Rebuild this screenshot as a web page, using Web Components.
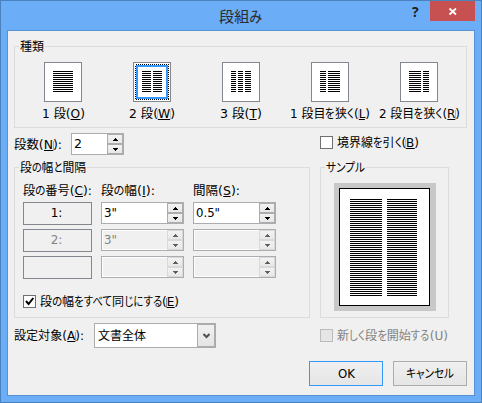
<!DOCTYPE html>
<html lang="ja">
<head>
<meta charset="utf-8">
<title>段組み</title>
<style>
    body {
        margin: 0;
        font: 12px/16px "DejaVu Sans", "Noto Sans CJK JP", sans-serif;
        color: #000;
        overflow: hidden;
    }
</style>
</head>
<body>
<columns-dialog></columns-dialog>
<script>
// Text with narrow kana; "_X" underlines X, "w" is the run width in px
class UiLabel extends HTMLElement {
    constructor() {
        super();
        this.attachShadow({ mode: 'open' });
    }

    connectedCallback() {
        const text = this.getAttribute('text');
        const html = text
            .replace(/[\u3041-\u30ff]+/g, '<span class="kana"><span>$&</span></span>')
            .replace(/_(.)/g, '<u>$1</u>');
        this.shadowRoot.innerHTML = `
            <style>
                :host { display: inline-block; height: 16px; white-space: nowrap; text-align: left; flex: none; }
                .run, .kana, .kana span { display: inline-block; transform-origin: 0 50%; }
                .run { line-height: 16px; }
                .kana { line-height: 1; }
                .kana span { transform: scaleX(.86); font-feature-settings: "palt"; }
                u { text-decoration: none; box-shadow: 0 1px 0 currentColor; display: inline-block; line-height: 10px; }
            </style>
            <span class="run">${html}</span>
        `;
        this.shadowRoot.querySelectorAll('.kana').forEach(kana => {
            kana.style.width = kana.firstChild.getBoundingClientRect().width + 'px';
        });
        const run = this.shadowRoot.querySelector('.run');
        const width = Number(this.getAttribute('w'));
        if (width) {
            run.style.transform = `scaleX(${width / run.getBoundingClientRect().width})`;
            this.style.width = width + 'px';
        }
    }
}

class GroupBox extends HTMLElement {
    constructor() {
        super();
        this.attachShadow({ mode: 'open' });
        this.shadowRoot.innerHTML = `
            <style>
                :host { display: block; box-sizing: border-box; position: relative; border: 1px solid #dcdcdc; }
                .legend { position: absolute; left: 4px; top: -8px; height: 16px; padding: 0 1px; background: #f0f0f0; }
            </style>
            <div class="legend"><slot name="legend"></slot></div>
            <slot></slot>
        `;
    }
}

class PresetTile extends HTMLElement {
    constructor() {
        super();
        this.attachShadow({ mode: 'open' });
    }

    connectedCallback() {
        let lines = '';
        this.getAttribute('cols').split(' ').forEach(col => {
            const [x, w] = col.split(',');
            for (let i = 0; i < 11; i++) {
                lines += `<rect x="${x}" y="${9 + i * 2}" width="${w}" height="1"/>`;
            }
        });
        const focus = this.hasAttribute('selected') ? `
            <rect x="2.5" y="2.5" width="33" height="35" fill="none" stroke="#000" stroke-dasharray="1 1"/>
            <rect x="4" y="4" width="30" height="32" fill="none" stroke="#3399ff" stroke-width="2"/>` : '';
        this.shadowRoot.innerHTML = `
            <style>
                :host { display: flex; flex-direction: column; align-items: center; }
                svg { display: block; margin-bottom: 4px; }
            </style>
            <svg width="38" height="40" shape-rendering="crispEdges">
                <rect x=".5" y=".5" width="37" height="39" fill="#fff" stroke="#828790"/>
                ${focus}${lines}
            </svg>
            <slot></slot>
        `;
    }
}

class SpinBox extends HTMLElement {
    constructor() {
        super();
        this.attachShadow({ mode: 'open' });
        this.shadowRoot.innerHTML = `
            <style>
                :host {
                    display: flex; box-sizing: border-box; width: 83px; height: 22px;
                    border: 1px solid #abadb3; background: #fff; --edge: #acacac; --arrow: #000;
                }
                :host([disabled]) { color: #838383; --edge: #d9d9d9; --arrow: #606060; }
                .value { flex: 1; margin: 1px 0 1px 1px; padding-left: 1px; height: 18px; line-height: 18px; }
                :host([disabled]) .value { background: #f0f0f0; }
                .buttons { width: 16px; display: grid; grid-template-rows: 10px 10px; }
                .buttons div {
                    box-sizing: border-box; border: 1px solid var(--edge); background: linear-gradient(#f2f2f2, #e8e8e8);
                    display: flex; align-items: center; justify-content: center;
                }
                svg { display: block; fill: var(--arrow); }
            </style>
            <div class="value"><slot></slot></div>
            <div class="buttons">
                <div><svg width="5" height="3" shape-rendering="crispEdges"><path d="M2 0h1v1h1v1h1v1H0V2h1V1h1z"/></svg></div>
                <div><svg width="5" height="3" shape-rendering="crispEdges"><path d="M0 0h5v1H4v1H3v1H2V2H1V1H0z"/></svg></div>
            </div>
        `;
    }
}

class CheckBox extends HTMLElement {
    constructor() {
        super();
        this.attachShadow({ mode: 'open' });
        this.shadowRoot.innerHTML = `
            <style>
                :host { display: flex; height: 16px; gap: 4px; }
                .box { box-sizing: border-box; width: 13px; height: 13px; margin-top: 1px; border: 1px solid #707070; background: #fff; }
                :host([disabled]) { color: #838383; }
                :host([disabled]) .box { border-color: #bcbcbc; background: #e6e6e6; }
                svg { display: none; }
                :host([checked]) svg { display: block; }
            </style>
            <div class="box"><svg width="11" height="11"><path d="M2 5l2.6 3L9.3 2" fill="none" stroke="#000" stroke-width="2"/></svg></div>
            <slot></slot>
        `;
    }
}

class PushButton extends HTMLElement {
    constructor() {
        super();
        this.attachShadow({ mode: 'open' });
        this.shadowRoot.innerHTML = `
            <style>
                :host {
                    display: flex; align-items: center; justify-content: center; box-sizing: border-box;
                    width: 74px; height: 25px; border: 1px solid #acacac; background: linear-gradient(#f0f0f0, #e5e5e5);
                }
                :host([default]) { border-color: #3399ff; }
            </style>
            <slot></slot>
        `;
    }
}

class SamplePage extends HTMLElement {
    constructor() {
        super();
        this.attachShadow({ mode: 'open' });
        let lines = '';
        for (let y = 16; y <= 112; y += 2) {
            lines += `<path d="M16 ${y}h32v1H16zM53 ${y}h30v1H53z"/>`;
        }
        this.shadowRoot.innerHTML = `
            <style>
                :host { display: block; }
                svg { display: block; }
            </style>
            <svg width="102" height="128" shape-rendering="crispEdges">
                <rect width="102" height="128" fill="#c8c8c8"/>
                <rect x="5.5" y="5.5" width="90" height="117" fill="#fff" stroke="#000"/>
                ${lines}
            </svg>
        `;
    }
}

class ColumnsDialog extends HTMLElement {
    constructor() {
        super();
        this.attachShadow({ mode: 'open' });
        this.shadowRoot.innerHTML = `
            <style>
                :host {
                    display: flex; flex-direction: column; box-sizing: border-box; width: 482px; height: 403px;
                    border: 1px solid #4a82bd; background: #6badf6;
                }
                header { height: 29px; display: grid; grid-template-columns: 1fr auto 1fr; }
                .title { font-size: 15px; color: #2b2b2b; padding: 8px 2px 0 0; }
                .controls { display: flex; justify-content: flex-end; padding-right: 6px; }
                .help { font: bold 14px/21px "Open Sans", sans-serif; color: #1e1e1e; width: 18px; }
                .close { width: 45px; height: 20px; background: #c75050; }
                .close svg { display: block; }
                main {
                    box-sizing: border-box; width: 468px; height: 366px; margin-left: 6px; flex: none;
                    border: 1px solid #5591d3; background: #f0f0f0; padding: 15px 7px 0 6px;
                }
                .presets { height: 82px; }
                .tiles { display: grid; grid-template-columns: repeat(5, 88px); gap: 1px; padding: 15px 0 0 4px; }
                .body { display: grid; grid-template-columns: 296px 129px; grid-template-rows: 34px 151px 43px; column-gap: 10px; padding-top: 5px; }
                .row { display: flex; align-items: flex-start; }
                .count > ui-label { margin: 4px 9px 0 0; }
                .count spin-box { width: 53px; }
                .fields { display: grid; grid-template-columns: 69px 83px 83px; column-gap: 9px; grid-template-rows: 19px 27px 27px 27px; padding: 15px 0 0 8px; }
                .cell { box-sizing: border-box; height: 23px; border: 1px solid #828790; line-height: 21px; text-align: center; padding-right: 2px; }
                .off { color: #838383; }
                .same { margin: 11px 0 0 8px; }
                .sample sample-page { margin: 15px 0 0 13px; }
                .line { margin-top: 2px; }
                .start { margin-top: 10px; }
                .apply { padding-top: 5px; }
                .apply > ui-label { margin-top: 5px; }
                .combo { box-sizing: border-box; width: 122px; height: 25px; border: 1px solid #acacac; border-right-width: 2px; background: #fff; display: flex; margin-left: 10px; }
                .combo ui-label { margin: 4px 0 0 3px; }
                .drop { width: 17px; margin-left: auto; box-sizing: border-box; border: solid #acacac; border-width: 1px 0 1px 1px; background: linear-gradient(#f0f0f0, #e5e5e5); display: flex; align-items: center; justify-content: center; }
                footer { display: flex; justify-content: flex-end; gap: 10px; }
            </style>
            <header>
                <div></div>
                <div class="title"><ui-label text="段組み" w="43"></ui-label></div>
                <div class="controls">
                    <div class="help">?</div>
                    <div class="close">
                        <svg width="45" height="20"><path d="M19.5 7.5l6.5 6M26 7.5l-6.5 6" stroke="#fff" stroke-width="1.8"/></svg>
                    </div>
                </div>
            </header>
            <main>
                <group-box class="presets">
                    <ui-label slot="legend" text="種類" w="24"></ui-label>
                    <div class="tiles">
                        <preset-tile cols="9,20"><ui-label text="1 段(_O)" w="43"></ui-label></preset-tile>
                        <preset-tile cols="9,9 20,9" selected><ui-label text="2 段(_W)" w="46"></ui-label></preset-tile>
                        <preset-tile cols="9,5 16,5 23,6"><ui-label text="3 段(_T)" w="42"></ui-label></preset-tile>
                        <preset-tile cols="9,6 17,12"><ui-label text="1 段目を狭く(_L)" w="80"></ui-label></preset-tile>
                        <preset-tile cols="9,12 23,6"><ui-label text="2 段目を狭く(_R)" w="81"></ui-label></preset-tile>
                    </div>
                </group-box>
                <div class="body">
                    <div class="row count">
                        <ui-label text="段数(_N):" w="48"></ui-label>
                        <spin-box><ui-label text="2" w="8"></ui-label></spin-box>
                    </div>
                    <check-box class="line"><ui-label text="境界線を引く(_B)" w="82"></ui-label></check-box>
                    <group-box>
                        <ui-label slot="legend" text="段の幅と間隔" w="66"></ui-label>
                        <div class="fields">
                            <ui-label text="段の番号(_C):" w="69"></ui-label>
                            <ui-label text="段の幅(_I):" w="54"></ui-label>
                            <ui-label text="間隔(_S):" w="47"></ui-label>
                            <div class="cell">1:</div>
                            <spin-box><ui-label text='3"' w="13"></ui-label></spin-box>
                            <spin-box><ui-label text='0.5"' w="24"></ui-label></spin-box>
                            <div class="cell off">2:</div>
                            <spin-box disabled><ui-label text='3"' w="13"></ui-label></spin-box>
                            <spin-box disabled></spin-box>
                            <div class="cell"></div>
                            <spin-box disabled></spin-box>
                            <spin-box disabled></spin-box>
                        </div>
                        <check-box class="same" checked><ui-label text="段の幅をすべて同じにする(_E)" w="139"></ui-label></check-box>
                    </group-box>
                    <group-box class="sample">
                        <ui-label slot="legend" text="サンプル" w="39"></ui-label>
                        <sample-page></sample-page>
                    </group-box>
                    <div class="row apply">
                        <ui-label text="設定対象(_A):" w="70"></ui-label>
                        <div class="combo">
                            <ui-label text="文書全体" w="48"></ui-label>
                            <div class="drop"><svg width="7" height="6"><path d="M.5 1l3 3 3-3" fill="none" stroke="#505050" stroke-width="2"/></svg></div>
                        </div>
                    </div>
                    <check-box class="start" disabled><ui-label text="新しく段を開始する(U)" w="111"></ui-label></check-box>
                </div>
                <footer>
                    <push-button default><ui-label text="OK" w="17"></ui-label></push-button>
                    <push-button><ui-label text="キャンセル" w="48"></ui-label></push-button>
                </footer>
            </main>
        `;
    }
}

customElements.define('ui-label', UiLabel);
customElements.define('group-box', GroupBox);
customElements.define('preset-tile', PresetTile);
customElements.define('spin-box', SpinBox);
customElements.define('check-box', CheckBox);
customElements.define('push-button', PushButton);
customElements.define('sample-page', SamplePage);
customElements.define('columns-dialog', ColumnsDialog);
</script>
</body>
</html>
